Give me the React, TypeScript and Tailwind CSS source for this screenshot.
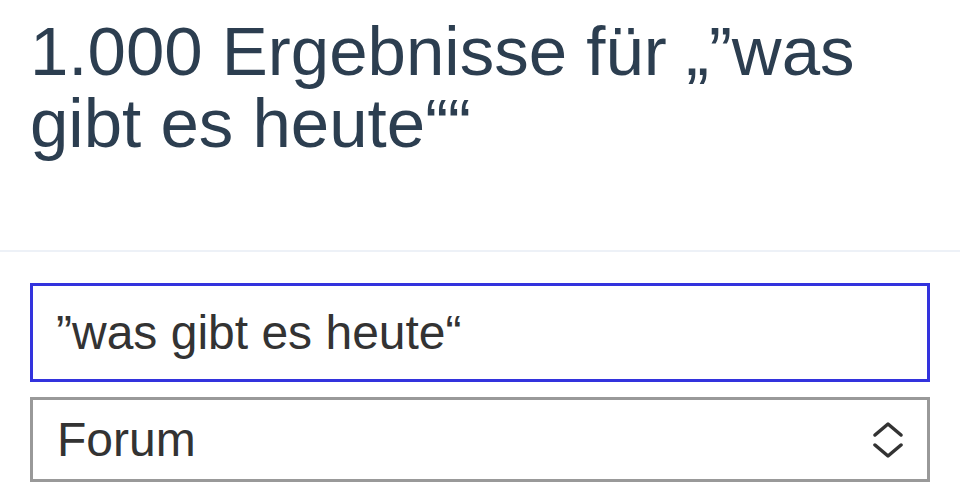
export default function App() {
  return (
    <div className="w-[960px] h-[488px] overflow-hidden bg-white" style={{ fontFamily: '"Liberation Sans", Arial, sans-serif' }}>
      <div className="px-[30px] pt-[16px] pb-[90px]">
        <h1 className="text-[69px] leading-[72px] text-[#2c3e50] font-normal">
          1.000 Ergebnisse für „”was gibt es heute““
        </h1>
      </div>
      <div className="h-[2px] bg-[#edf1f7]" />
      <div className="px-[30px] pt-[31px] flex flex-col gap-[15px]">
        <div className="h-[99px] border-[3px] border-[#3333dd] flex items-center pl-[23px] text-[48px] text-[#333]">
          ”was gibt es heute“
        </div>
        <div className="h-[85px] border-[3px] border-[#999] flex items-center justify-between pl-[24px] pr-[24px] text-[48px] text-[#333]">
          <span>Forum</span>
          <svg width="30" height="36" viewBox="0 0 30 36" fill="none" stroke="#333" strokeWidth="3.5" strokeLinecap="round" strokeLinejoin="round">
            <path d="M2 13 L15 2 L28 13" />
            <path d="M2 23 L15 34 L28 23" />
          </svg>
        </div>
      </div>
    </div>
  );
}
